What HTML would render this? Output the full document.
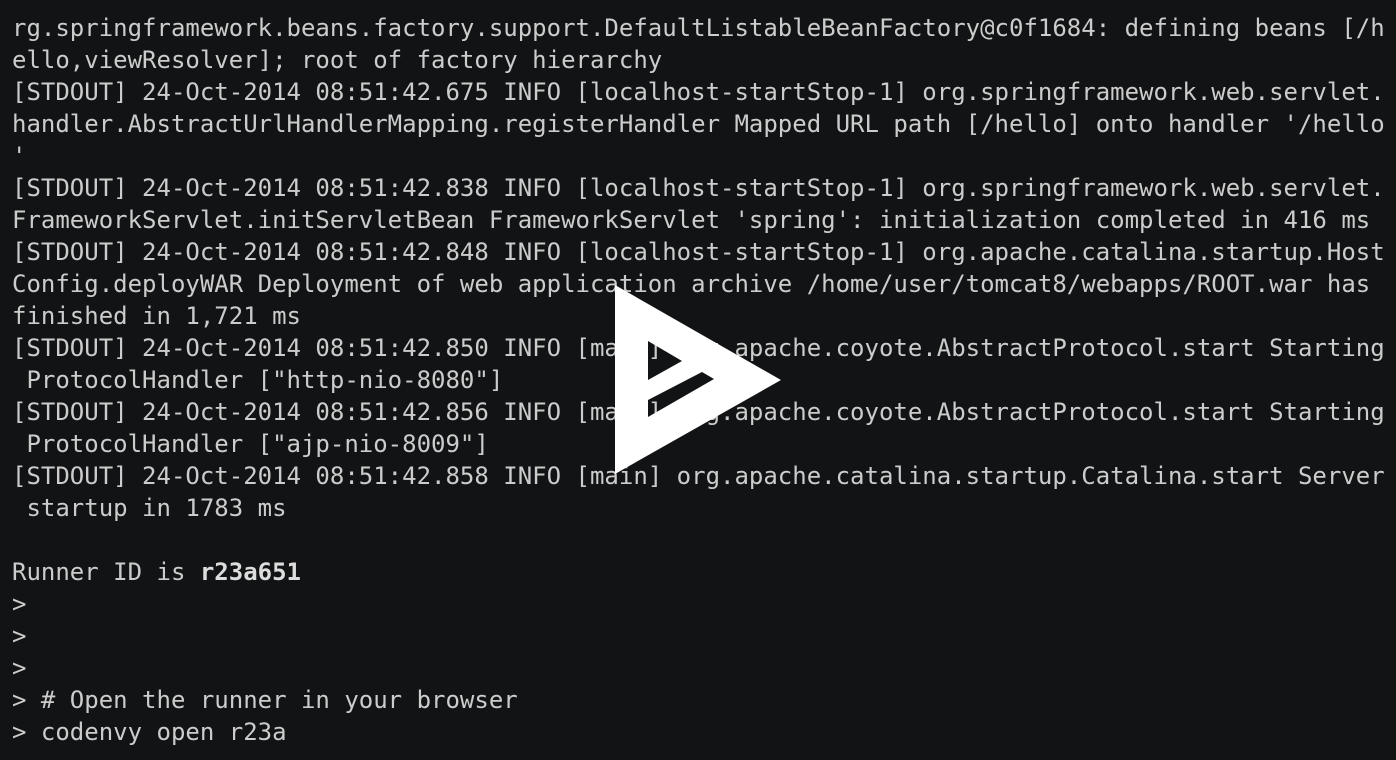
<!DOCTYPE html>
<html><head><meta charset="utf-8"><style>
html,body{margin:0;padding:0;background:#121314;width:1396px;height:760px;overflow:hidden}
pre{margin:0;position:absolute;left:12px;top:12px;font-family:"DejaVu Sans Mono","Liberation Mono",monospace;font-size:24px;line-height:32px;color:#cccccc;white-space:pre}
b{font-weight:bold;color:#ddd}
svg{position:absolute;left:0;top:0}
</style></head><body>
<pre>rg.springframework.beans.factory.support.DefaultListableBeanFactory@c0f1684: defining beans [/h
ello,viewResolver]; root of factory hierarchy
[STDOUT] 24-Oct-2014 08:51:42.675 INFO [localhost-startStop-1] org.springframework.web.servlet.
handler.AbstractUrlHandlerMapping.registerHandler Mapped URL path [/hello] onto handler '/hello
'
[STDOUT] 24-Oct-2014 08:51:42.838 INFO [localhost-startStop-1] org.springframework.web.servlet.
FrameworkServlet.initServletBean FrameworkServlet 'spring': initialization completed in 416 ms
[STDOUT] 24-Oct-2014 08:51:42.848 INFO [localhost-startStop-1] org.apache.catalina.startup.Host
Config.deployWAR Deployment of web application archive /home/user/tomcat8/webapps/ROOT.war has
finished in 1,721 ms
[STDOUT] 24-Oct-2014 08:51:42.850 INFO [main] org.apache.coyote.AbstractProtocol.start Starting
 ProtocolHandler ["http-nio-8080"]
[STDOUT] 24-Oct-2014 08:51:42.856 INFO [main] org.apache.coyote.AbstractProtocol.start Starting
 ProtocolHandler ["ajp-nio-8009"]
[STDOUT] 24-Oct-2014 08:51:42.858 INFO [main] org.apache.catalina.startup.Catalina.start Server
 startup in 1783 ms

Runner ID is <b>r23a651</b>
&gt;
&gt;
&gt;
&gt; # Open the runner in your browser
&gt; codenvy open r23a</pre>
<svg width="1396" height="760">
<path fill="#fff" fill-rule="evenodd" d="M615 285 L781 380 L615 474 Z M648 341 L648 380 L682 361 Z M648 417 L648 400 L702 372 L714 379 Z"/>
</svg>
</body></html>
